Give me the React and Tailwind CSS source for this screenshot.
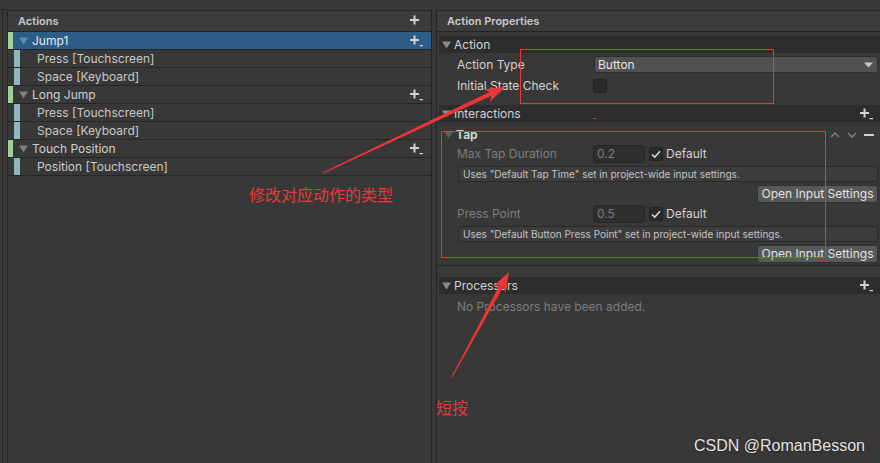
import React from "react";

const Tri = ({ c = "#8a8a8a" }) => (
  <svg width="9" height="8" viewBox="0 0 9 8" className="shrink-0">
    <path d="M0 0.5 H9 L4.5 7.5 Z" fill={c} />
  </svg>
);

const Plus = ({ drop }) => (
  <svg width="14" height="12" viewBox="0 0 14 12" className="shrink-0">
    <path d="M4.5 0.5v9M0 5h9" stroke="#d4d4d4" strokeWidth="2" />
    {drop && <path d="M9.5 10h3.5v1.2h-3.5z" fill="#d4d4d4" />}
  </svg>
);

const ActionRow = ({ name, selected }) => (
  <div className="h-[18px] flex items-center border-b border-[#262626]">
    <div className="w-[5px] h-full bg-[#a4d095] shrink-0" />
    <div className={`flex-1 h-full flex items-center pl-[6px] pr-[7px] ${selected ? "bg-[#2c5d87]" : ""}`}>
      <Tri c={selected ? "#6d89a6" : "#7e7e7e"} />
      <span className={`ml-[4px] text-[12px] flex-1 ${selected ? "text-[#e8e8e8]" : "text-[#d0d0d0]"}`}>{name}</span>
      <Plus drop />
    </div>
  </div>
);

const BindingRow = ({ name }) => (
  <div className="h-[18px] flex items-center border-b border-[#262626]">
    <div className="w-[6px] h-full shrink-0" />
    <div className="w-[6px] h-full bg-[#8cb9bc] shrink-0" />
    <span className="ml-[17px] text-[12px] text-[#c8c8c8]">{name}</span>
  </div>
);

const Foldout = ({ title, plus, bold }) => (
  <div className="h-[17px] bg-[#2d2d2d] flex items-center pl-[3px] pr-[6px]">
    <Tri c="#8a8a8a" />
    <span className={`ml-[3px] text-[12px] text-[#d2d2d2] flex-1 ${bold ? "font-bold" : ""}`}>{title}</span>
    {plus && <Plus drop />}
  </div>
);

const Check = () => (
  <div className="w-[14px] h-[14px] rounded-[2px] bg-[#2a2a2a] border border-[#232323] flex items-center justify-center shrink-0">
    <svg width="10" height="9" viewBox="0 0 10 9">
      <path d="M1 4.5 L3.8 7.2 L9 1.3" stroke="#d8d8d8" strokeWidth="1.6" fill="none" />
    </svg>
  </div>
);

const TapField = ({ label, value }) => (
  <div className="h-[18px] flex items-center pl-[18px]">
    <span className="w-[136px] text-[12px] text-[#7d7d7d]">{label}</span>
    <div className="w-[52px] h-[18px] rounded-[3px] bg-[#2e2e2e] border border-[#272727] flex items-center pl-[3px] text-[12px] text-[#7d7d7d]">
      {value}
    </div>
    <div className="ml-[4px]">
      <Check />
    </div>
    <span className="ml-[3px] text-[12px] text-[#d0d0d0]">Default</span>
  </div>
);

const HelpBox = ({ text }) => (
  <div className="ml-[19px] mr-[2px] h-[16px] rounded-[3px] bg-[#3c3c3c] border border-[#2a2a2a] flex items-center px-[4px] text-[10px] text-[#c4c4c4]">
    {text}
  </div>
);

const Btn = () => (
  <div className="flex justify-end pr-[2px]">
    <div className="w-[121px] h-[18px] rounded-[3px] bg-[#585858] border border-[#303030] flex items-center justify-center text-[12px] text-[#e2e2e2]">
      Open Input Settings
    </div>
  </div>
);

export default function App() {
  return (
    <div className="relative w-[880px] h-[463px] overflow-hidden bg-[#383838] flex font-[Inter,sans-serif]">
      {/* left strip */}
      <div className="w-[7px] shrink-0 h-full flex flex-col">
        <div className="h-[10px] border-b border-[#282828]" />
        <div className="ml-[2px] flex-1 border-l border-[#282828]" />
      </div>

      {/* left panel */}
      <div className="w-[425px] shrink-0 mt-[10px] border border-b-0 border-[#242424] flex flex-col">
        <div className="h-[21px] flex items-center justify-between pl-[10px] pr-[7px] text-[11px] font-semibold text-[#c8c8c8] border-b border-[#242424] bg-[#3c3c3c]">
          <span>Actions</span>
          <Plus />
        </div>
        <ActionRow name="Jump1" selected />
        <BindingRow name="Press [Touchscreen]" />
        <BindingRow name="Space [Keyboard]" />
        <ActionRow name="Long Jump" />
        <BindingRow name="Press [Touchscreen]" />
        <BindingRow name="Space [Keyboard]" />
        <ActionRow name="Touch Position" />
        <BindingRow name="Position [Touchscreen]" />
      </div>

      <div className="w-[4px] shrink-0" />

      {/* right panel */}
      <div className="flex-1 mt-[10px] border-l border-t border-[#242424] flex flex-col">
        <div className="h-[21px] flex items-center pl-[10px] text-[11px] font-semibold text-[#c8c8c8] border-b border-[#242424] bg-[#3c3c3c]">
          Action Properties
        </div>
        <div className="pl-[2px] flex flex-col">
          <div className="h-[4px]" />
          <Foldout title="Action" />
          <div className="h-[3px]" />
          <div className="h-[17px] flex items-center pl-[18px] pr-[2px]">
            <span className="w-[137px] text-[12px] text-[#d2d2d2]">Action Type</span>
            <div className="flex-1 h-[17px] rounded-[3px] bg-[#515151] border border-[#2e2e2e] flex items-center pl-[3px] pr-[4px] text-[12px] text-[#e2e2e2]">
              <span className="flex-1">Button</span>
              <svg width="9" height="6" viewBox="0 0 9 6">
                <path d="M0 0.5 H9 L4.5 5.5 Z" fill="#c8c8c8" />
              </svg>
            </div>
          </div>
          <div className="h-[3px]" />
          <div className="h-[19px] flex items-center pl-[18px]">
            <span className="w-[136px] text-[12px] text-[#d2d2d2]">Initial State Check</span>
            <div className="w-[14px] h-[14px] rounded-[2px] bg-[#2a2a2a] border border-[#232323]" />
          </div>
          <div className="h-[10px]" />
          <Foldout title="Interactions" plus />
          <div className="h-[6px]" />
          <div className="h-[14px] flex items-center pl-[5px] pr-[6px]">
            <Tri c="#5e5e5e" />
            <span className="ml-[3px] text-[12px] font-bold text-[#d2d2d2] flex-1">Tap</span>
            <svg width="12" height="8" viewBox="0 0 12 8" className="mr-[5px]">
              <path d="M2 6 L6 2 L10 6" stroke="#7c7c7c" strokeWidth="1.6" fill="none" />
            </svg>
            <svg width="12" height="8" viewBox="0 0 12 8" className="mr-[6px]">
              <path d="M2 2 L6 6 L10 2" stroke="#7c7c7c" strokeWidth="1.6" fill="none" />
            </svg>
            <svg width="10" height="4" viewBox="0 0 10 4">
              <rect x="0" y="1" width="10" height="2" fill="#d0d0d0" />
            </svg>
          </div>
          <div className="h-[3px]" />
          <TapField label="Max Tap Duration" value="0.2" />
          <div className="h-[3px]" />
          <HelpBox text={'Uses "Default Tap Time" set in project-wide input settings.'} />
          <div className="h-[3px]" />
          <Btn />
          <div className="h-[2px]" />
          <TapField label="Press Point" value="0.5" />
          <div className="h-[3px]" />
          <HelpBox text={'Uses "Default Button Press Point" set in project-wide input settings.'} />
          <div className="h-[3px]" />
          <Btn />
          <div className="h-[2px]" />
        </div>
        <div className="h-px bg-[#232323]" />
        <div className="pl-[2px] flex flex-col">
          <div className="h-[11px]" />
          <Foldout title="Processors" plus />
          <div className="h-[4px]" />
          <div className="h-[18px] flex items-center pl-[18px] text-[12px] text-[#7d7d7d]">
            No Processors have been added.
          </div>
        </div>
      </div>

      {/* annotations */}
      <svg className="absolute left-0 top-0 pointer-events-none" width="880" height="463" viewBox="0 0 880 463">
        <rect x="520.5" y="49.5" width="253" height="54" fill="none" stroke="#ee3535" strokeWidth="1" />
        <rect x="441.5" y="131.5" width="384" height="126" fill="none" stroke="#ee3535" strokeWidth="1" />
        <rect x="593" y="118" width="3" height="1" fill="#ee3535" />
        <polygon
          points="323.2,173.5 491.4,95.7 489.9,101.9 505,87 483.9,89.3 489.6,92.1 322.8,172.5"
          fill="#ee3535"
        />
        <polygon
          points="452.4,377.2 503.2,287 505.7,292.8 509,272 493.3,286.2 499.6,285 451.6,376.8"
          fill="#ee3535"
        />
      </svg>
      <div className="absolute left-[249px] top-[184px] text-[16px] leading-[20px] text-[#e83a3a] font-['Noto_Sans_CJK_SC',sans-serif]">
        修改对应动作的类型
      </div>
      <div className="absolute left-[436px] top-[397px] text-[16px] leading-[20px] text-[#e83a3a] font-['Noto_Sans_CJK_SC',sans-serif]">
        短按
      </div>
      <div className="absolute left-[694px] top-[436px] text-[16px] leading-[20px] text-[#e4e4e4] font-['Liberation_Sans',Arial,sans-serif] [text-shadow:0_0_2px_rgba(0,0,0,0.6)]">
        CSDN @RomanBesson
      </div>
    </div>
  );
}
